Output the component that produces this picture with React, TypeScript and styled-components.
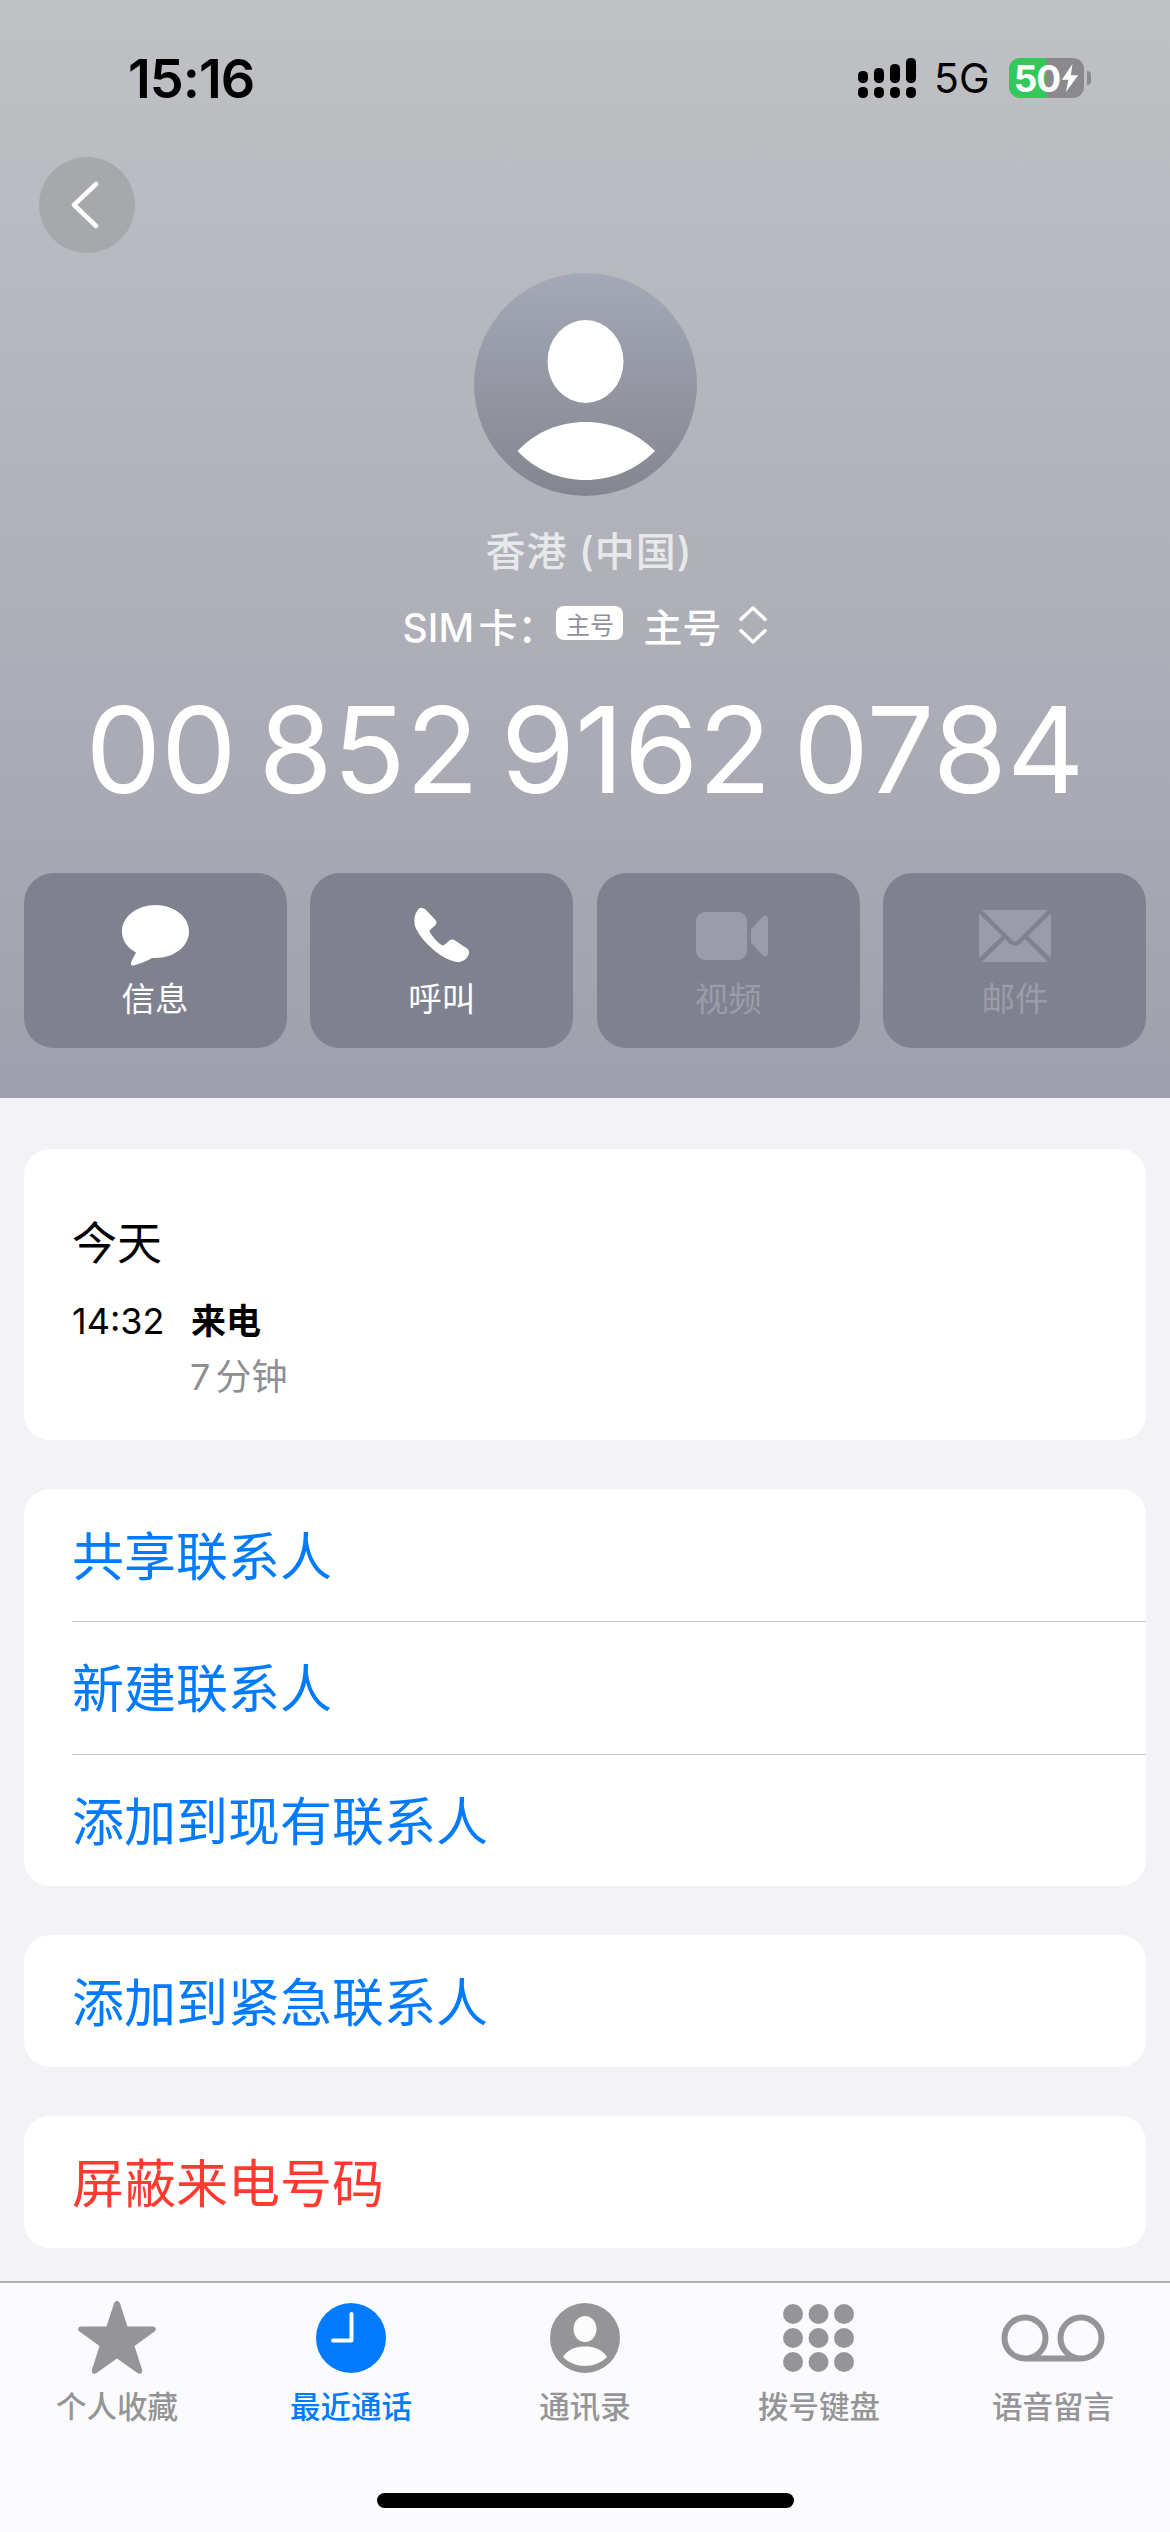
import React from 'react';
import styled, { createGlobalStyle } from 'styled-components';

const FONT = `Inter, "Noto Sans CJK SC", sans-serif`;

const GlobalStyle = createGlobalStyle`
  html, body {
    margin: 0;
    padding: 0;
    background: #f2f2f7;
  }
  body {
    font-family: ${FONT};
  }
  * {
    box-sizing: border-box;
  }
`;

const ChatIcon = () => (
  <svg width="67" height="62" viewBox="0 0 67 62">
    <path
      fill="#fff"
      d="M33.500 0C15 0 0 11.700 0 26.500C0 35.500 5 42.500 14 47.500C12.500 51 10 54.500 9 57.500C8.500 59.500 9.500 61 11.500 60.500C18 59 25 56 30 53L33.500 53C52 53 67 41.500 67 26.500C67 11.700 52 0 33.500 0z"
    />
  </svg>
);

const PhoneIcon = () => (
  <svg width="56" height="56" viewBox="0 0 56 56">
    <path
      fill="#fff"
      d="M5.700 0C8-.5 10.500.5 12 2L21.500 12C22.800 13.500 22.800 15.500 21.500 17L16.500 21.500C15.500 22.500 15.500 23.500 16 24.500C19 29.500 23 33.800 27.500 37C28.500 37.700 29.500 37.500 30.500 36.700L35.500 32.500C37.300 31.200 39.500 31.300 41 32.500L53 40.500C55.500 42.300 55.700 45.500 54 48C51.500 52 47 55 42 53.800C34 52 26 47.500 18.500 41C11.500 35 5.500 28 2 20.500C-.8 14.500-.3 5 5.700 0z"
    />
  </svg>
);

const VideoIcon = () => (
  <svg width="80" height="48" viewBox="-8 0 80 48">
    <rect x="0" y="0" width="51" height="48" rx="9" fill="#9b9ca9" />
    <path
      fill="#9b9ca9"
      d="M55 17.500 L67 4.500 C69 2.400 72 3.500 72 6.500 V41.500 C72 44.500 69 45.600 67 43.500 L55 30.500z"
    />
  </svg>
);

const MailIcon = () => (
  <svg width="72" height="52" viewBox="0 0 72 52">
    <path fill="#9b9ca9" d="M3 0 H69 L39 30 C37 32 35 32 33 30z" />
    <path fill="#9b9ca9" d="M0 3.500 L23 26 L0 48z" />
    <path fill="#9b9ca9" d="M72 3.500 L49 26 L72 48z" />
    <path fill="#9b9ca9" d="M3 52 L26 29 L30.500 33.500 C34 36.500 38 36.500 41.500 33.500 L46 29 L69 52z" />
  </svg>
);

const StarIcon = () => (
  <svg width="78" height="74" viewBox="0 0 78 74">
    <path
      fill="#959597"
      d="M39 0 C40.500 0 41.500 1 42 2.500 L49.500 25.500 H74.500 C78 25.500 79 28.500 76.500 30.500 L56.500 45 L64 68.500 C65 72 62.500 74 59.500 72 L39 57.500 L18.500 72 C15.500 74 13 72 14 68.500 L21.500 45 L1.500 30.500 C-1 28.500 0 25.500 3.500 25.500 H28.500 L36 2.500 C36.500 1 37.500 0 39 0z"
    />
  </svg>
);

const ClockIcon = () => (
  <svg width="70" height="70" viewBox="0 0 70 70">
    <circle cx="35" cy="35" r="35" fill="#007aff" />
    <path d="M35.500 11 V37.500 H17" fill="none" stroke="#fff" strokeWidth="4" strokeLinecap="round" strokeLinejoin="round" />
  </svg>
);

const ContactIcon = () => (
  <svg width="70" height="70" viewBox="0 0 70 70">
    <circle cx="35" cy="35" r="35" fill="#959597" />
    <ellipse cx="35" cy="26" rx="11.500" ry="13" fill="#fcfcfd" />
    <path d="M13 54 C18 46 26 43.500 35 43.500 C44 43.500 52 46 57 54 C51 60 43 63 35 63 C27 63 19 60 13 54z" fill="#fcfcfd" />
  </svg>
);

const KeypadIcon = () => (
  <svg width="72" height="68" viewBox="0 0 72 68">
    {[0, 1, 2].map((row) =>
      [0, 1, 2].map((col) => (
        <circle key={`${row}-${col}`} cx={10 + col * 25.500} cy={10 + row * 24} r="10" fill="#959597" />
      )),
    )}
  </svg>
);

const VoicemailIcon = () => (
  <svg width="104" height="48" viewBox="0 0 104 48">
    <path
      d="M24 44.500 H80 M24 44.500 A20.500 20.500 0 1 1 24 3.500 A20.500 20.500 0 1 1 24 44.500z M80 44.500 A20.500 20.500 0 1 1 80 3.500 A20.500 20.500 0 1 1 80 44.500z"
      fill="none"
      stroke="#959597"
      strokeWidth="6"
    />
  </svg>
);

const App = () => {
  return (
    <>
      <GlobalStyle />
      <S.Page>
        <S.Header>
          <S.StatusBar>
            <S.Time>15:16</S.Time>
            <S.StatusRight>
              <svg width="58" height="40" viewBox="0 0 58 40">
                {[
                  [0, 13],
                  [16, 10],
                  [32, 6],
                  [48, 0],
                ].map(([x, y]) => (
                  <React.Fragment key={x}>
                    <rect x={x} y={y} width="10" height={25 - y} rx="4.500" fill="#000" />
                    <rect x={x} y="29" width="10" height="11" rx="4.500" fill="#000" />
                  </React.Fragment>
                ))}
              </svg>
              <S.Network>5G</S.Network>
              <S.Battery>
                <S.BatteryLevel>50</S.BatteryLevel>
                <svg width="18" height="28" viewBox="0 0 22 30" preserveAspectRatio="none">
                  <path fill="#fff" d="M14 0 L1 17 H9 L6 30 L21 12 H12z" />
                </svg>
                <S.BatteryTip />
              </S.Battery>
            </S.StatusRight>
          </S.StatusBar>
          <S.BackRow>
            <S.BackButton>
              <svg width="30" height="48" viewBox="0 0 30 48">
                <path d="M26 3 L4 24 L26 45" fill="none" stroke="#fff" strokeWidth="4.500" strokeLinecap="round" strokeLinejoin="round" />
              </svg>
            </S.BackButton>
          </S.BackRow>
          <S.Avatar>
            <svg width="223" height="223" viewBox="0 0 223 223">
              <ellipse cx="111.500" cy="88.500" rx="38" ry="41.500" fill="#fff" />
              <path d="M43.500 178 C62 158 87 149 111.500 149 C136 149 161 158 181 178 C161 198 136 207 111.500 207 C87 207 62 198 43.500 178z" fill="#fff" />
            </svg>
          </S.Avatar>
          <S.Region>香港 (中国)</S.Region>
          <S.SimRow>
            <S.SimLabel>SIM 卡：</S.SimLabel>
            <S.SimBadge>主号</S.SimBadge>
            <S.SimName>主号</S.SimName>
            <svg width="28" height="38" viewBox="0 0 28 40" preserveAspectRatio="none">
              <path d="M2 14 L14 2 L26 14 M2 26 L14 38 L26 26" fill="none" stroke="#fff" strokeWidth="3.500" strokeLinecap="round" strokeLinejoin="round" />
            </svg>
          </S.SimRow>
          <S.Number>00 852 9162 0784</S.Number>
          <S.Actions>
            <S.ActionButton>
              <S.ActionIcon><ChatIcon /></S.ActionIcon>
              <S.ActionLabel>信息</S.ActionLabel>
            </S.ActionButton>
            <S.ActionButton>
              <S.ActionIcon><PhoneIcon /></S.ActionIcon>
              <S.ActionLabel>呼叫</S.ActionLabel>
            </S.ActionButton>
            <S.ActionButton>
              <S.ActionIcon><VideoIcon /></S.ActionIcon>
              <S.ActionLabel $disabled>视频</S.ActionLabel>
            </S.ActionButton>
            <S.ActionButton>
              <S.ActionIcon><MailIcon /></S.ActionIcon>
              <S.ActionLabel $disabled>邮件</S.ActionLabel>
            </S.ActionButton>
          </S.Actions>
        </S.Header>

        <S.Content>
          <S.HistoryCard>
            <S.HistoryDate>今天</S.HistoryDate>
            <S.HistoryRow>
              <S.HistoryTime>14:32</S.HistoryTime>
              <div>
                <S.HistoryType>来电</S.HistoryType>
                <S.HistoryDuration>7 分钟</S.HistoryDuration>
              </div>
            </S.HistoryRow>
          </S.HistoryCard>
          <S.Card>
            <S.Row>共享联系人</S.Row>
            <S.Row>新建联系人</S.Row>
            <S.Row>添加到现有联系人</S.Row>
          </S.Card>
          <S.Card>
            <S.Row>添加到紧急联系人</S.Row>
          </S.Card>
          <S.Card>
            <S.Row $danger>屏蔽来电号码</S.Row>
          </S.Card>
        </S.Content>

        <S.TabBar>
          <S.Tabs>
            <S.Tab>
              <S.TabIcon><StarIcon /></S.TabIcon>
              <S.TabLabel>个人收藏</S.TabLabel>
            </S.Tab>
            <S.Tab>
              <S.TabIcon><ClockIcon /></S.TabIcon>
              <S.TabLabel $active>最近通话</S.TabLabel>
            </S.Tab>
            <S.Tab>
              <S.TabIcon><ContactIcon /></S.TabIcon>
              <S.TabLabel>通讯录</S.TabLabel>
            </S.Tab>
            <S.Tab>
              <S.TabIcon><KeypadIcon /></S.TabIcon>
              <S.TabLabel>拨号键盘</S.TabLabel>
            </S.Tab>
            <S.Tab>
              <S.TabIcon><VoicemailIcon /></S.TabIcon>
              <S.TabLabel>语音留言</S.TabLabel>
            </S.Tab>
          </S.Tabs>
          <S.HomeIndicator />
        </S.TabBar>
      </S.Page>
    </>
  );
};

const S = {
  Page: styled.div`
    display: flex;
    flex-direction: column;
    width: 1170px;
    height: 2532px;
    overflow: hidden;
    background: #f2f2f7;
  `,

  Header: styled.header`
    display: flex;
    flex-direction: column;
    align-items: center;
    height: 1098px;
    flex-shrink: 0;
    background: linear-gradient(180deg, #c0c1c5 0%, #b5b6bc 35%, #9fa0ad 100%);
  `,

  StatusBar: styled.div`
    display: flex;
    justify-content: space-between;
    align-items: center;
    width: 100%;
    height: 58px;
    margin-top: 49px;
    padding: 0 86px 0 128px;
  `,

  Time: styled.div`
    font-size: 54px;
    font-weight: 600;
    letter-spacing: -1px;
    color: #000;
  `,

  StatusRight: styled.div`
    display: flex;
    align-items: center;
    gap: 19.5px;
  `,

  Network: styled.div`
    margin-left: -2px;
    font-size: 41px;
    font-weight: 400;
    color: #000;
  `,

  Battery: styled.div`
    position: relative;
    display: flex;
    align-items: center;
    justify-content: center;
    gap: 1px;
    width: 75px;
    height: 40px;
    border-radius: 11px;
    background: linear-gradient(90deg, #34c759 0 50%, #8a8a8e 50% 100%);
  `,

  BatteryLevel: styled.span`
    font-size: 37px;
    font-weight: 700;
    letter-spacing: -1px;
    color: #fff;
  `,

  BatteryTip: styled.span`
    position: absolute;
    right: -7px;
    top: 13px;
    width: 4px;
    height: 14px;
    border-radius: 0 4px 4px 0;
    background: #8a8a8e;
  `,

  BackRow: styled.div`
    display: flex;
    width: 100%;
    padding: 50px 0 0 39px;
  `,

  BackButton: styled.div`
    display: flex;
    align-items: center;
    justify-content: center;
    width: 96px;
    height: 96px;
    border-radius: 50%;
    padding-right: 4px;
    background: #a7a8ac;
  `,

  Avatar: styled.div`
    width: 223px;
    height: 223px;
    margin-top: 20px;
    border-radius: 50%;
    overflow: hidden;
    background: linear-gradient(180deg, #a4a9b7 0%, #84868f 100%);
  `,

  Region: styled.div`
    margin-top: 27px;
    padding-left: 8px;
    height: 58px;
    line-height: 58px;
    font-size: 40px;
    letter-spacing: 1px;
    font-weight: 500;
    color: #e7e8ea;
  `,

  SimRow: styled.div`
    display: flex;
    align-items: center;
    height: 50px;
    margin-top: 19px;
    color: #fff;
  `,

  SimLabel: styled.span`
    font-size: 39px;
    font-weight: 500;
    word-spacing: -6px;
  `,

  SimBadge: styled.span`
    display: flex;
    align-items: center;
    justify-content: center;
    width: 67px;
    height: 34px;
    margin-bottom: 4px;
    border-radius: 8px;
    background: #fff;
    color: #8f909c;
    font-size: 24px;
  `,

  SimName: styled.span`
    margin: 0 18px 0 20px;
    font-size: 39px;
    font-weight: 500;
  `,

  Number: styled.div`
    margin-top: 33px;
    height: 134px;
    line-height: 134px;
    font-size: 120px;
    font-weight: 400;
    word-spacing: -12px;
    color: #fff;
    white-space: nowrap;
  `,

  Actions: styled.div`
    display: grid;
    grid-template-columns: repeat(4, 263px);
    gap: 23.67px;
    margin-top: 56px;
  `,

  ActionButton: styled.div`
    display: flex;
    flex-direction: column;
    align-items: center;
    height: 175px;
    padding-top: 32px;
    border-radius: 30px;
    background: #80818f;
  `,

  ActionIcon: styled.div`
    display: flex;
    align-items: center;
    justify-content: center;
    height: 62px;
  `,

  ActionLabel: styled.div<{ $disabled?: boolean }>`
    margin-top: 10px;
    font-size: 33.5px;
    line-height: 44px;
    color: ${({ $disabled }) => ($disabled ? '#9b9ca9' : '#fff')};
  `,

  Content: styled.main`
    display: flex;
    flex-direction: column;
    flex: 1;
    gap: 48.5px;
    padding: 51px 24px 0;
  `,

  Card: styled.section`
    border-radius: 26px;
    background: #fff;
    overflow: hidden;
  `,

  HistoryCard: styled.section`
    height: 291px;
    padding: 65px 48px 0;
    border-radius: 26px;
    background: #fff;
  `,

  HistoryDate: styled.div`
    font-size: 45px;
    line-height: 60px;
    color: #000;
  `,

  HistoryRow: styled.div`
    display: flex;
    margin-top: 23px;
  `,

  HistoryTime: styled.div`
    width: 118px;
    font-size: 36px;
    line-height: 48px;
    color: #000;
  `,

  HistoryType: styled.div`
    margin-left: 1px;
    font-size: 35px;
    font-weight: 700;
    line-height: 48px;
    color: #000;
  `,

  HistoryDuration: styled.div`
    margin-top: 8px;
    font-size: 36px;
    line-height: 48px;
    word-spacing: -5px;
    color: #8e8e93;
  `,

  Row: styled.div<{ $danger?: boolean }>`
    position: relative;
    height: 132.5px;
    padding: 4px 0 0 48px;
    font-size: 52px;
    line-height: 130px;
    color: ${({ $danger }) => ($danger ? '#ff3b30' : '#007aff')};

    & + &::before {
      content: '';
      position: absolute;
      top: 0;
      left: 48px;
      right: 0;
      height: 1px;
      background: #c6c6c8;
    }
  `,

  TabBar: styled.nav`
    position: relative;
    height: 251px;
    flex-shrink: 0;
    border-top: 2px solid #b0b0b4;
    background: #fbfbfd;
  `,

  Tabs: styled.div`
    display: grid;
    grid-template-columns: repeat(5, 1fr);
    width: 1170px;
  `,

  Tab: styled.div`
    display: flex;
    flex-direction: column;
    align-items: center;
    padding-top: 16px;
  `,

  TabIcon: styled.div`
    display: flex;
    align-items: center;
    justify-content: center;
    height: 78px;
  `,

  TabLabel: styled.div<{ $active?: boolean }>`
    margin-top: 9px;
    font-size: 30.5px;
    line-height: 42px;
    font-weight: 500;
    color: ${({ $active }) => ($active ? '#007aff' : '#959597')};
  `,

  HomeIndicator: styled.div`
    position: absolute;
    left: 377px;
    bottom: 24px;
    width: 417px;
    height: 15px;
    border-radius: 8px;
    background: #000;
  `,
};

export default App;
